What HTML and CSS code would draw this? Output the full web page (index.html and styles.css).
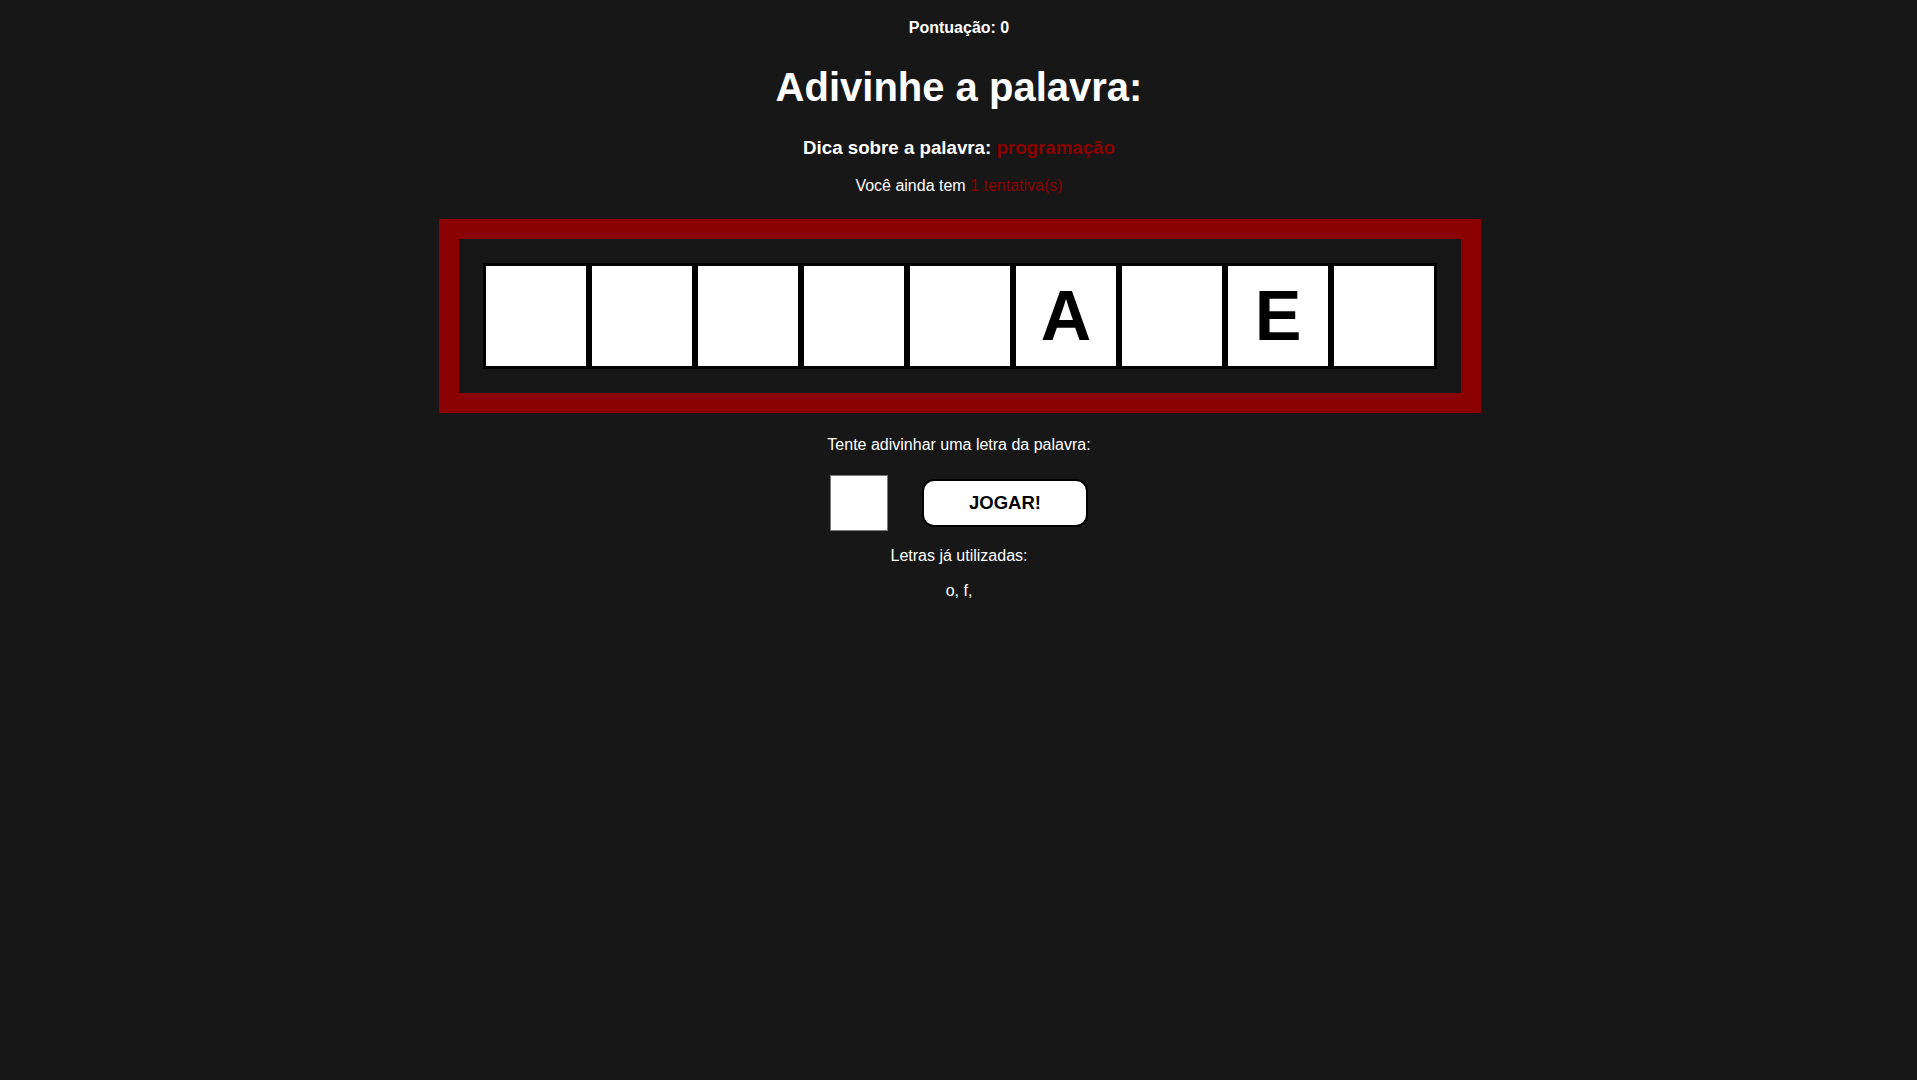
FILE: index.html
```html
<!DOCTYPE html>
<html lang="pt-BR">
<head>
<meta charset="utf-8">
<title>Adivinhe a palavra</title>
<link rel="stylesheet" href="styles.css">
</head>
<body>
<main class="game">
  <h4 class="score">Pontuação: 0</h4>
  <h1 class="title">Adivinhe a palavra:</h1>
  <h3 class="hint">Dica sobre a palavra: <span class="accent">programação</span></h3>
  <p class="tries">Você ainda tem <span class="accent">1 tentativa(s)</span></p>
  <section class="board">
    <div class="word">
      <div class="cell"></div>
      <div class="cell"></div>
      <div class="cell"></div>
      <div class="cell"></div>
      <div class="cell"></div>
      <div class="cell">A</div>
      <div class="cell"></div>
      <div class="cell">E</div>
      <div class="cell"></div>
    </div>
  </section>
  <p class="prompt">Tente adivinhar uma letra da palavra:</p>
  <div class="controls">
    <input class="letter-input" type="text" maxlength="1">
    <button class="play">JOGAR!</button>
  </div>
  <p class="used-label">Letras já utilizadas:</p>
  <p class="used">o, f,</p>
</main>
</body>
</html>
```
FILE: styles.css
```css
html, body {
  margin: 0;
  padding: 0;
  background: #171717;
}
body {
  font-family: "Liberation Sans", Arial, sans-serif;
  color: #ffffff;
}
.game {
  display: flex;
  flex-direction: column;
  align-items: center;
  text-align: center;
  padding-top: 19px;
  padding-left: 1px;
}
.score {
  margin: 0;
  font-size: 16px;
  line-height: 18px;
  font-weight: bold;
}
.title {
  margin: 27px 0 0;
  font-size: 40px;
  line-height: 46px;
  font-weight: bold;
}
.hint {
  margin: 27px 0 0;
  font-size: 18.72px;
  line-height: 22px;
  font-weight: bold;
}
.accent {
  color: #8b0000;
}
.tries {
  margin: 18px 0 0;
  font-size: 16px;
  line-height: 18px;
}
.board {
  margin: 24px 0 0 2px;
  border: 20px solid #8b0000;
  padding: 24px;
  background: #171717;
}
.word {
  display: flex;
}
.cell {
  width: 100px;
  height: 100px;
  border: 3px solid #000;
  background: #fff;
  color: #000;
  font-size: 70px;
  font-weight: bold;
  line-height: 100px;
  text-align: center;
}
.prompt {
  margin: 23px 0 0;
  font-size: 16px;
  line-height: 18px;
}
.controls {
  margin-top: 21px;
  display: flex;
  align-items: center;
  gap: 34px;
  height: 56px;
}
.letter-input {
  box-sizing: border-box;
  width: 58px;
  height: 56px;
  margin: 0;
  border: 1px solid #7a7a7a;
  background: #fff;
  padding: 0;
}
.play {
  box-sizing: border-box;
  width: 166px;
  height: 48px;
  margin: 0;
  border: 2px solid #000;
  border-radius: 12px;
  background: #fff;
  color: #000;
  font-family: "Liberation Sans", Arial, sans-serif;
  font-size: 18.5px;
  font-weight: bold;
}
.used-label {
  margin: 16px 0 0;
  font-size: 16px;
  line-height: 18px;
}
.used {
  margin: 17px 0 0;
  font-size: 16px;
  line-height: 18px;
}
```
